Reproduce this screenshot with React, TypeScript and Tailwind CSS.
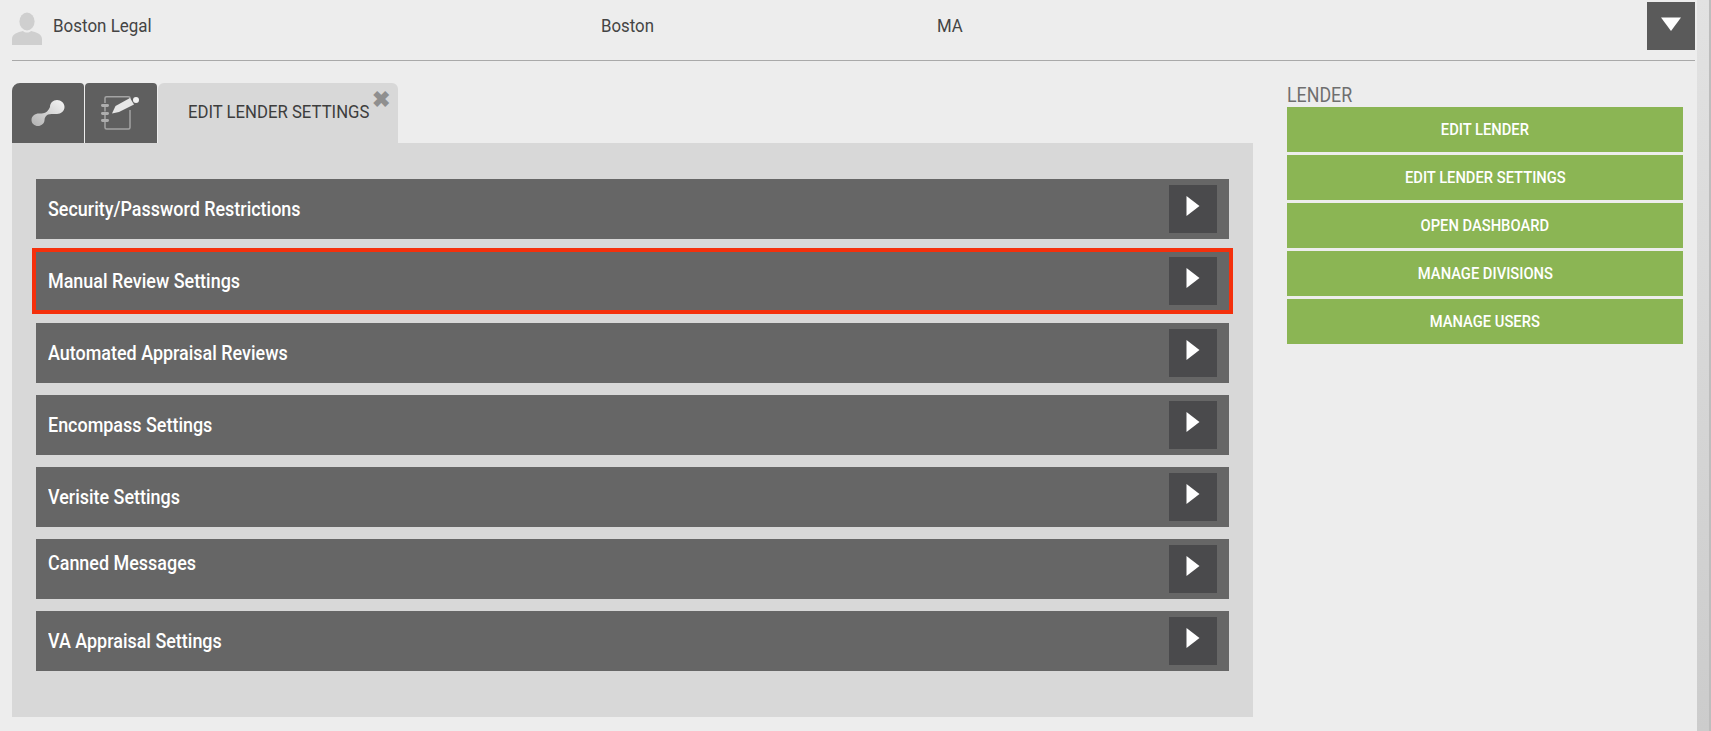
import React from "react";

const rows = [
  "Security/Password Restrictions",
  "Manual Review Settings",
  "Automated Appraisal Reviews",
  "Encompass Settings",
  "Verisite Settings",
  "Canned Messages",
  "VA Appraisal Settings",
];

const actions = ["EDIT LENDER", "EDIT LENDER SETTINGS", "OPEN DASHBOARD", "MANAGE DIVISIONS", "MANAGE USERS"];

function Person() {
  return (
    <svg width="30" height="33" viewBox="0 0 30 33" fill="#cfcfcf">
      <ellipse cx="15" cy="9.5" rx="7.6" ry="9" />
      <path d="M0 33 V27 C0 22 6 20 11 19 C13 21 17 21 19 19 C24 20 30 22 30 27 V33 Z" />
    </svg>
  );
}

function LinkIcon() {
  return (
    <svg width="34" height="26" viewBox="0 0 34 26">
      <defs>
        <linearGradient id="lg" x1="0" y1="1" x2="1" y2="0">
          <stop offset="0" stopColor="#b0b0b0" />
          <stop offset="1" stopColor="#f6f6f6" />
        </linearGradient>
      </defs>
      <path
        d="M0.5 20 C0.5 16 4 13.5 8 13.5 C12 13.5 16 14 19 7 C19 3 22 0 26 0 C30 0 33.5 3 33.5 7 C33.5 11 30 14 26 14 C22 14 19 13.5 17 14.5 C15 15.5 13.5 17.5 13.5 20 C13.5 23.5 10 26 7 26 C3.5 26 0.5 23.5 0.5 20 Z"
        fill="url(#lg)"
      />
    </svg>
  );
}

function NotebookIcon() {
  return (
    <svg width="40" height="36" viewBox="0 0 40 36" fill="none">
      <path d="M4 7 V2 Q4 0.8 5.5 0.8 H27.5 Q29 0.8 29 2 V5 M29 14 V31.5 Q29 33 27.5 33 H5.5 Q4 33 4 31.5 V26" stroke="#a4a4a4" strokeWidth="1.5" />
      <path d="M4 11 V15.5 M4 19 V23" stroke="#a4a4a4" strokeWidth="1.5" />
      <rect x="0" y="8" width="8" height="3" rx="1.4" fill="#adadad" />
      <rect x="0" y="16" width="8" height="3" rx="1.4" fill="#adadad" />
      <rect x="0" y="23" width="8" height="3" rx="1.4" fill="#adadad" />
      <path d="M11 17.5 L14.5 10 L29 2 L33 8.5 L18 16 Z" fill="#e6e6e6" />
      <circle cx="35" cy="4" r="3" fill="#f2f2f2" />
    </svg>
  );
}

function Triangle({ dir }: { dir: "right" | "down" }) {
  return dir === "right" ? (
    <svg width="14" height="20" viewBox="0 0 14 20" fill="#fff">
      <path d="M0.5 0 L13.5 10 L0.5 20 Z" />
    </svg>
  ) : (
    <svg width="20" height="14" viewBox="0 0 20 14" fill="#fff">
      <path d="M0 0.5 H20 L10 14 Z" />
    </svg>
  );
}

function Row({ label, highlighted, shifted }: { label: string; highlighted: boolean; shifted: boolean }) {
  return (
    <div className="relative flex h-[60px] items-center justify-between bg-[#666666] pl-3 pr-3">
      {highlighted && <div className="absolute -inset-x-1 -inset-y-[3px] border-4 border-[#f4300c]" />}
      <span
        className={`inline-block origin-left scale-x-[0.92] whitespace-nowrap text-[19.5px] font-medium text-white ${
          shifted ? "mb-[10px]" : "mt-[2px]"
        }`}
      >
        {label}
      </span>
      <span className="flex h-12 w-12 justify-center bg-[#4a4a4c] pt-[11px]">
        <Triangle dir="right" />
      </span>
    </div>
  );
}

export default function App() {
  return (
    <div className="flex h-[731px] overflow-hidden bg-[#ededed] font-['Roboto',sans-serif]">
      <div className="flex min-w-0 flex-1 flex-col pl-3 pr-[2px]">
        <header className="flex h-[61px] shrink-0 items-start justify-between border-b border-[#a9a9a9] pt-[2px]">
          <div className="flex items-start pt-[10px] text-[17.5px] text-[#444444]">
            <Person />
            <span className="ml-[11px] mt-[1px] inline-block w-[548px] origin-left scale-x-[0.97]">Boston Legal</span>
            <span className="mt-[1px] inline-block w-[336px] origin-left scale-x-[0.96]">Boston</span>
            <span className="mt-[1px] inline-block origin-left scale-x-[0.96]">MA</span>
          </div>
          <button className="flex h-12 w-12 items-center justify-center bg-[#5a5a5a] pb-1">
            <Triangle dir="down" />
          </button>
        </header>

        <div className="mt-[22px] flex min-h-0">
          <main className="w-[1241px] shrink-0">
            <div className="flex h-[60px] gap-px">
              <div className="flex w-[72px] items-center justify-center rounded-tl-lg rounded-tr-sm bg-[#5f5f5f]">
                <LinkIcon />
              </div>
              <div className="flex w-[72px] items-center justify-center rounded-tl-sm rounded-tr-sm bg-[#5f5f5f] pt-[2px]">
                <NotebookIcon />
              </div>
              <div className="relative flex w-[240px] items-start rounded-t-md bg-[#d8d8d8] pl-[30px] pt-[15px]">
                <span className="inline-block origin-left scale-x-[0.88] whitespace-nowrap text-[19px] text-[#3d3d3d]">
                  EDIT LENDER SETTINGS
                </span>
                <span className="absolute right-[8px] top-[6px] text-[22px] font-bold leading-none text-[#8f8f8f]">✖</span>
              </div>
            </div>
            <div className="flex h-[574px] flex-col gap-3 bg-[#d8d8d8] px-6 pt-9">
              {rows.map((r, i) => (
                <Row key={r} label={r} highlighted={i === 1} shifted={i === 5} />
              ))}
            </div>
          </main>

          <aside className="ml-[34px] w-[396px] shrink-0 pt-[1px]">
            <div className="origin-left scale-x-[0.89] text-[20px] leading-[23px] text-[#6f6f6f]">LENDER</div>
            <div className="flex flex-col gap-[3px]">
              {actions.map((a) => (
                <button key={a} className="h-[45px] bg-[#8bb554] text-[16px] font-medium text-white">
                  <span className="inline-block scale-x-[0.92] whitespace-nowrap">{a}</span>
                </button>
              ))}
            </div>
          </aside>
        </div>
      </div>
      <div className="w-[14px] shrink-0 border-r-2 border-[#bdbdbd] bg-linear-to-b from-[#e2e2e2] to-[#cccccc]" />
    </div>
  );
}
